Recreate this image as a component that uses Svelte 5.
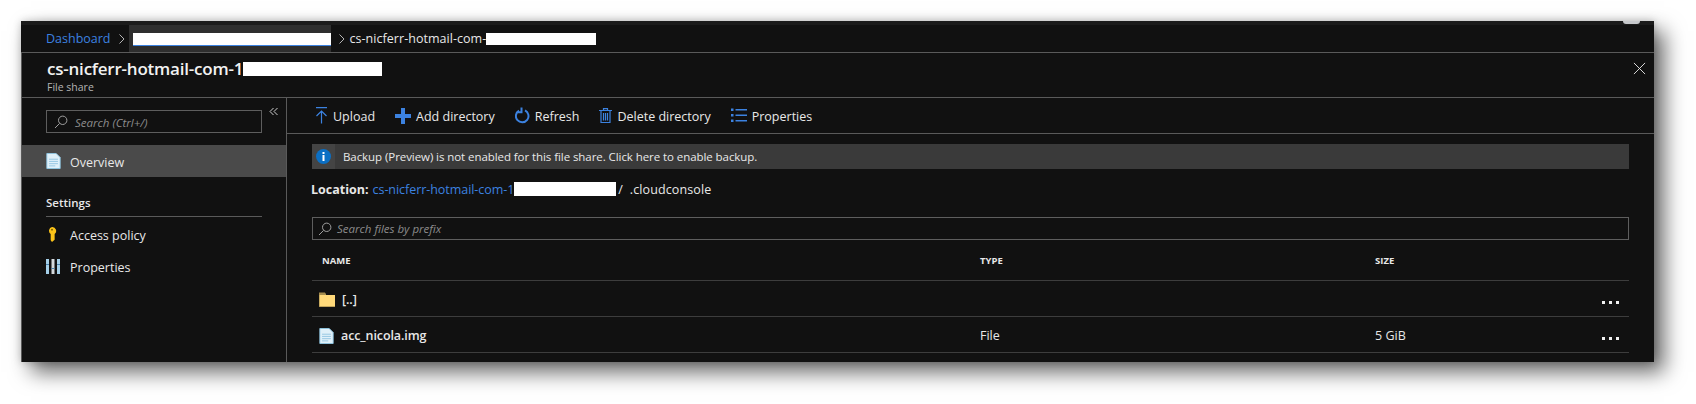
<script>
  const rows = [
    { name: '[..]', kind: 'folder', type: '', size: '' },
    { name: 'acc_nicola.img', kind: 'file', type: 'File', size: '5 GiB' }
  ];
</script>

<div class="page">
  <div class="window">
    <span class="avatar"></span>
    <nav class="crumbs">
      <a class="link" href="#dash">Dashboard</a>
      <svg class="chev" viewBox="0 0 8 12"><path d="M1.5 1.5 6 6l-4.5 4.5" /></svg>
      <div class="crumb-active"><span class="mask"></span></div>
      <svg class="chev" viewBox="0 0 8 12"><path d="M1.5 1.5 6 6l-4.5 4.5" /></svg>
      <span class="crumb-text">cs-nicferr-hotmail-com-</span>
      <span class="mask small"></span>
    </nav>

    <div class="panel">
      <header class="head">
        <div>
          <div class="title"><h1>cs-nicferr-hotmail-com-1</h1><span class="mask title-mask"></span></div>
          <div class="sub">File share</div>
        </div>
        <svg class="close" viewBox="0 0 14 14"><path d="M1 1l12 12M13 1 1 13" /></svg>
      </header>

      <div class="body">
        <aside class="side">
          <div class="side-search-row">
            <div class="box side-search">
              <svg class="lens" viewBox="0 0 14 14"><circle cx="8.7" cy="5.3" r="4.2" /><path d="M5.6 8.4 1 13" /></svg>
              <span>Search (Ctrl+/)</span>
            </div>
            <svg class="collapse" viewBox="0 0 10 10"><path d="M4.5 1 1 4.5 4.5 8M8.5 1 5 4.5 8.5 8" /></svg>
          </div>

          <div class="side-item active">
            <svg class="doc" viewBox="0 0 16 18"><path class="doc-fill" d="M.5.5h10.5l4.5 4.5v12.500H.5z" /><path class="doc-lines" d="M3 7h10M3 9.500h10M3 12h10M3 14.500h7" /></svg>
            <span>Overview</span>
          </div>

          <div class="side-group">Settings</div>

          <div class="side-item">
            <svg class="key" viewBox="0 0 12 17"><path d="M6 0a4.500 4.500 0 0 1 3 8v6.500L6 17l-1.500-2V8A4.500 4.500 0 0 1 6 0z" /><circle cx="6" cy="3" r="1.100" fill="#7a5c00" /></svg>
            <span>Access policy</span>
          </div>
          <div class="side-item last">
            <svg class="bars" viewBox="0 0 14 15"><path d="M0 0h3v15H0z" fill="#a5cfe8" /><path d="M5.500 0h3v15h-3z" fill="#d5d9dc" /><path d="M11 0h3v15h-3z" fill="#a5cfe8" /><path d="M0 5h3v1H0zM5.500 9h3v1h-3zM11 5h3v1h-3z" fill="#4c84ad" /></svg>
            <span>Properties</span>
          </div>
        </aside>

        <main class="main">
          <div class="toolbar">
            <span class="tool">
              <svg width="13" height="17" viewBox="0 0 13 17" class="stroke thin"><path d="M1 .7h11M6.500 16.500V4M1.500 9l5-5 5 5" /></svg>
              <span>Upload</span>
            </span>
            <span class="tool">
              <svg width="16" height="16" viewBox="0 0 16 16"><path class="solid" d="M6 0h4v6h6v4h-6v6H6v-6H0V6h6z" /></svg>
              <span>Add directory</span>
            </span>
            <span class="tool">
              <svg width="15" height="17" viewBox="0 0 15 17" class="stroke"><path d="M4 3.600a6.300 6.300 0 1 0 6-.2M6.500.5v4.700H2" /></svg>
              <span>Refresh</span>
            </span>
            <span class="tool">
              <svg width="13" height="15" viewBox="0 0 13 15" class="stroke thin"><path d="M0 2.500h13M4.500 2.500V.7h4v1.800M2 2.500v12h9v-12M4.500 5v7.500M6.500 5v7.500M8.500 5v7.500" /></svg>
              <span>Delete directory</span>
            </span>
            <span class="tool">
              <svg width="16" height="15" viewBox="0 0 16 15"><path class="solid" d="M0 .5h2.500V3H0zM4.500 1H16v1.500H4.500zM0 6h2.500v2.500H0zM4.500 6.500H16V8H4.500zM0 11.500h2.500V14H0zM4.500 12H16v1.500H4.500z" /></svg>
              <span>Properties</span>
            </span>
          </div>

          <div class="content">
            <div class="notice">
              <span class="notice-icon">
                <svg width="15" height="15" viewBox="0 0 15 15"><circle cx="7.500" cy="7.500" r="7.500" fill="#0b6fc4" /><path d="M6.500 3h2v2h-2zM6.500 6h2v6h-2z" fill="#fff" /></svg>
              </span>
              <span>Backup (Preview) is not enabled for this file share. Click here to enable backup.</span>
            </div>

            <div class="location">
              <b>Location:</b>
              <a class="link" href="#share">cs-nicferr-hotmail-com-1</a><span class="mask loc-mask"></span>
              <span class="path">/ &nbsp;.cloudconsole</span>
            </div>

            <div class="box file-search">
              <svg class="lens" viewBox="0 0 14 14"><circle cx="8.700" cy="5.300" r="4.200" /><path d="M5.600 8.400 1 13" /></svg>
              <span>Search files by prefix</span>
            </div>

            <div class="table">
              <div class="row head-row">
                <span>NAME</span><span>TYPE</span><span>SIZE</span><span></span>
              </div>
              {#each rows as row}
                <div class="row">
                  <span class="name">
                    {#if row.kind === 'folder'}
                      <svg width="16" height="15" viewBox="0 0 16 15"><path d="M0 1h6l1 2h9v12H0z" fill="#ffd97a" /><path d="M0 .5h6l1 2.500H.6v12H0z" fill="#a58c4e" /><path d="M0 14.300h16v.7H0z" fill="#a58c4e" /></svg>
                    {:else}
                      <svg class="doc" viewBox="0 0 16 18"><path class="doc-fill" d="M.5.5h10.500l4.500 4.500v12.500H.5z" /><path class="doc-lines" d="M3 7h10M3 9.500h10M3 12h10M3 14.500h7" /></svg>
                    {/if}
                    <span>{row.name}</span>
                  </span>
                  <span>{row.type}</span>
                  <span>{row.size}</span>
                  <span class="dots"><i></i><i></i><i></i></span>
                </div>
              {/each}
            </div>
          </div>
        </main>
      </div>
    </div>
  </div>
</div>

<style>
  :global(body) {
    margin: 0;
    background: #fff;
  }

  .page {
    height: 404px;
    box-sizing: border-box;
    padding: 21px 42px 0 21px;
    font-family: "Open Sans", "Liberation Sans", sans-serif;
    font-size: 12.500px;
    color: #e8e8e8;
    overflow: hidden;
  }

  .window {
    position: relative;
    height: 341px;
    background: #111;
    border-top: 4px solid #1b1b1b;
    box-sizing: border-box;
    box-shadow: 10px 10px 20px rgba(0, 0, 0, 0.6), 0 0 8px rgba(0, 0, 0, 0.2);
  }

  .avatar {
    position: absolute;
    top: -4px;
    right: 14px;
    width: 17px;
    height: 3px;
    background: #c6c8cb;
    border-radius: 0 0 9px 9px;
  }

  .link {
    color: #3c82e0;
    text-decoration: none;
  }

  .mask {
    display: inline-block;
    background: #fff;
  }

  .crumbs {
    display: flex;
    align-items: center;
    height: 27px;
    padding-left: 25px;
    border-bottom: 1px solid #5a5a5a;
  }

  .chev {
    width: 8px;
    height: 12px;
    fill: none;
    stroke: #b5b5b5;
    stroke-width: 1;
    margin: 0 3px 0 7px;
  }

  .crumb-active {
    width: 202px;
    height: 27px;
    box-sizing: border-box;
    padding: 8px 0 0 4px;
    background: #2e2e2e;
  }

  .crumb-active .mask {
    display: block;
    width: 198px;
    height: 12px;
    border-bottom: 1px solid #3c82e0;
  }

  .crumb-text {
    color: #e8e8e8;
    padding-left: 1px;
    letter-spacing: 0.04px;
  }

  .mask.small {
    width: 110px;
    height: 12px;
  }

  .panel {
    border-left: 1px solid #5a5a5a;
  }

  .head {
    display: flex;
    justify-content: space-between;
    height: 44px;
    padding-left: 25px;
    border-bottom: 1px solid #5a5a5a;
  }

  .title {
    display: flex;
    align-items: center;
    margin-top: 5px;
  }

  h1 {
    margin: 0;
    font-size: 17px;
    font-weight: 600;
    line-height: 22px;
    letter-spacing: -0.22px;
    color: #f2f2f2;
  }

  .title-mask {
    width: 139px;
    height: 14px;
  }

  .sub {
    font-size: 10.500px;
    line-height: 14px;
    color: #b4b4b4;
  }

  .close {
    width: 13px;
    height: 13px;
    margin: 9px 8px 0 0;
    fill: none;
    stroke: #e6e6e6;
    stroke-width: 1;
  }

  .body {
    display: flex;
    height: 264px;
  }

  .side {
    width: 265px;
    flex: none;
    box-sizing: border-box;
    border-right: 1px solid #5a5a5a;
  }

  .side-search-row {
    display: flex;
    padding: 12px 0 0 24px;
    height: 47px;
    box-sizing: border-box;
  }

  .box {
    display: flex;
    align-items: center;
    box-sizing: border-box;
    border: 1px solid #5e5e5e;
    color: #8c8c8c;
    font-style: italic;
    font-size: 11.500px;
  }

  .side-search {
    width: 216px;
    height: 23px;
    padding-left: 7px;
    gap: 7px;
  }

  .side-search span {
    padding-top: 1px;
  }

  .lens {
    width: 14px;
    height: 14px;
    flex: none;
    fill: none;
    stroke: #a0a0a0;
    stroke-width: 1;
  }

  .collapse {
    width: 10px;
    height: 10px;
    margin: -3px 0 0 7px;
    fill: none;
    stroke: #cfcfcf;
    stroke-width: 1;
  }

  .side-item {
    display: flex;
    align-items: center;
    height: 33px;
    padding-left: 24px;
    gap: 9px;
  }

  .side-item span {
    padding-top: 1px;
  }

  .side-item.active {
    height: 32px;
    background: #4a4a4a;
  }

  .side-item.active span {
    padding-top: 3px;
  }

  .side-item.last {
    height: 31px;
  }

  .side-group {
    margin: 16px 0 1px 24px;
    padding-top: 2px;
    width: 216px;
    height: 24px;
    box-sizing: border-box;
    border-bottom: 1px solid #5a5a5a;
    font-weight: 600;
    font-size: 11.500px;
  }

  .doc {
    width: 15px;
    height: 16px;
    flex: none;
  }

  .doc-fill {
    fill: #dff0f9;
    stroke: #8fcbea;
  }

  .doc-lines {
    fill: none;
    stroke: #8fc3e0;
  }

  .key {
    width: 12px;
    height: 15px;
    flex: none;
    fill: #fcc419;
    margin-right: 3px;
  }

  .bars {
    width: 14px;
    height: 15px;
    flex: none;
    margin-right: 1px;
  }

  .main {
    flex: 1;
    min-width: 0;
  }

  .toolbar {
    display: flex;
    align-items: center;
    height: 35px;
    padding-left: 28px;
    gap: 20px;
    border-bottom: 1px solid #5a5a5a;
  }

  .tool {
    display: flex;
    align-items: center;
    gap: 5px;
  }

  .tool > span {
    padding-top: 2px;
  }

  .stroke {
    fill: none;
    stroke: #3c82e0;
    stroke-width: 2;
  }

  .stroke.thin {
    stroke-width: 1.200;
  }

  .solid {
    fill: #3c82e0;
  }

  .content {
    padding: 10px 25px 0 25px;
  }

  .notice {
    display: flex;
    align-items: center;
    height: 25px;
    background: #3a3a3a;
    font-size: 11.500px;
    gap: 8px;
    letter-spacing: -0.07px;
  }

  .notice-icon {
    display: flex;
    align-items: center;
    justify-content: center;
    width: 23px;
    height: 25px;
    background: #444;
  }

  .location {
    display: flex;
    align-items: center;
    height: 22px;
    margin-top: 9px;
  }

  .location b {
    font-weight: 700;
    margin-right: 4px;
    margin-left: -1px;
  }

  .location .link {
    letter-spacing: -0.05px;
  }

  .loc-mask {
    width: 102px;
    height: 14px;
  }

  .path {
    margin-left: 2px;
    letter-spacing: 0.12px;
  }

  .file-search {
    height: 23px;
    margin-top: 17px;
    padding-left: 5px;
    gap: 5px;
  }

  .table {
    margin-top: 3px;
  }

  .row {
    display: grid;
    grid-template-columns: 658px 395px 1fr 27px;
    align-items: center;
    height: 36px;
    box-sizing: border-box;
    border-bottom: 1px solid #3d3d3d;
    padding-left: 10px;
  }

  .head-row {
    height: 38px;
    font-size: 9.500px;
    font-weight: 700;
    padding-bottom: 2px;
  }

  .row:not(.head-row) > span:not(.dots) {
    padding-top: 2px;
  }

  .name {
    display: flex;
    align-items: center;
    gap: 7px;
    margin-left: -3px;
    font-weight: 600;
    letter-spacing: -0.1px;
  }

  .dots {
    display: flex;
    gap: 4px;
    margin-top: 8px;
  }

  .dots i {
    width: 3px;
    height: 3px;
    background: #f0f0f0;
  }
</style>
